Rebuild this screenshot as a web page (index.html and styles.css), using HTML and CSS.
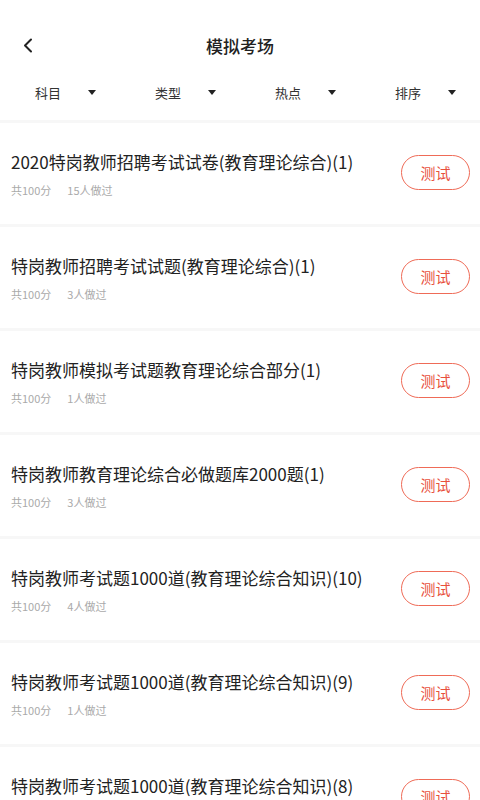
FILE: index.html
```html
<!DOCTYPE html>
<html lang="zh-CN">
<head>
    <meta charset="UTF-8">
    <meta name="viewport" content="width=device-width, initial-scale=1.0">
    <title>模拟考场</title>
    <link rel="stylesheet" href="styles.css">
</head>
<body>
    <div class="nav">
        <div class="nav-back">
            <svg width="10" height="15" viewBox="0 0 10 15">
                <path d="M8 1.5 L2 7.5 L8 13.5" fill="none" stroke="#222" stroke-width="2" stroke-linecap="round" stroke-linejoin="round"/>
            </svg>
        </div>
        <div class="nav-title">模拟考场</div>
        <div></div>
    </div>

    <div class="filters">
        <div class="filter"><span>科目</span><i class="caret"></i></div>
        <div class="filter"><span>类型</span><i class="caret"></i></div>
        <div class="filter"><span>热点</span><i class="caret"></i></div>
        <div class="filter"><span>排序</span><i class="caret"></i></div>
    </div>

    <div class="list">
        <div class="row">
            <div class="info">
                <div class="name">2020特岗教师招聘考试试卷(教育理论综合)(1)</div>
                <div class="meta"><span>共100分</span><span>15人做过</span></div>
            </div>
            <div class="btn">测试</div>
        </div>
        <div class="row">
            <div class="info">
                <div class="name">特岗教师招聘考试试题(教育理论综合)(1)</div>
                <div class="meta"><span>共100分</span><span>3人做过</span></div>
            </div>
            <div class="btn">测试</div>
        </div>
        <div class="row">
            <div class="info">
                <div class="name">特岗教师模拟考试题教育理论综合部分(1)</div>
                <div class="meta"><span>共100分</span><span>1人做过</span></div>
            </div>
            <div class="btn">测试</div>
        </div>
        <div class="row">
            <div class="info">
                <div class="name">特岗教师教育理论综合必做题库2000题(1)</div>
                <div class="meta"><span>共100分</span><span>3人做过</span></div>
            </div>
            <div class="btn">测试</div>
        </div>
        <div class="row">
            <div class="info">
                <div class="name">特岗教师考试题1000道(教育理论综合知识)(10)</div>
                <div class="meta"><span>共100分</span><span>4人做过</span></div>
            </div>
            <div class="btn">测试</div>
        </div>
        <div class="row">
            <div class="info">
                <div class="name">特岗教师考试题1000道(教育理论综合知识)(9)</div>
                <div class="meta"><span>共100分</span><span>1人做过</span></div>
            </div>
            <div class="btn">测试</div>
        </div>
        <div class="row">
            <div class="info">
                <div class="name">特岗教师考试题1000道(教育理论综合知识)(8)</div>
                <div class="meta"><span>共100分</span><span>2人做过</span></div>
            </div>
            <div class="btn">测试</div>
        </div>
    </div>
</body>
</html>
```

FILE: styles.css
```css
body {
    margin: 0;
    background: #fff;
    font-family: "Noto Sans CJK SC", "Noto Sans", sans-serif;
    color: #222;
    overflow: hidden;
}
.nav {
    display: grid;
    grid-template-columns: 1fr auto 1fr;
    align-items: center;
    height: 50px;
    padding-top: 20px;
}
.nav-back {
    padding-left: 23px;
    display: flex;
    align-items: center;
}
.nav-title {
    font-size: 17px;
    font-weight: 500;
    color: #222;
}
.filters {
    display: grid;
    grid-template-columns: repeat(4, 1fr);
    height: 44px;
    margin-bottom: 6px;
}
.filter {
    display: flex;
    align-items: center;
    padding-left: 35px;
    font-size: 13px;
    color: #333;
}
.caret {
    width: 0;
    height: 0;
    margin-left: 27px;
    border-left: 4.5px solid transparent;
    border-right: 4.5px solid transparent;
    border-top: 5px solid #222;
}
.row {
    display: flex;
    align-items: flex-start;
    border-top: 3px solid #f7f7f7;
    padding: 27px 10px 26px 11px;
}
.info {
    flex: 1;
}
.name {
    font-size: 17px;
    line-height: 24px;
    color: #222;
    white-space: nowrap;
}
.meta {
    display: flex;
    gap: 16px;
    margin-top: 8px;
    font-size: 11px;
    line-height: 16px;
    color: #aaa;
}
.btn {
    width: 67px;
    height: 33px;
    margin-top: 5px;
    border: 1.5px solid #ef6b57;
    border-radius: 18px;
    display: flex;
    align-items: center;
    justify-content: center;
    font-size: 15px;
    color: #e8503c;
}
```
